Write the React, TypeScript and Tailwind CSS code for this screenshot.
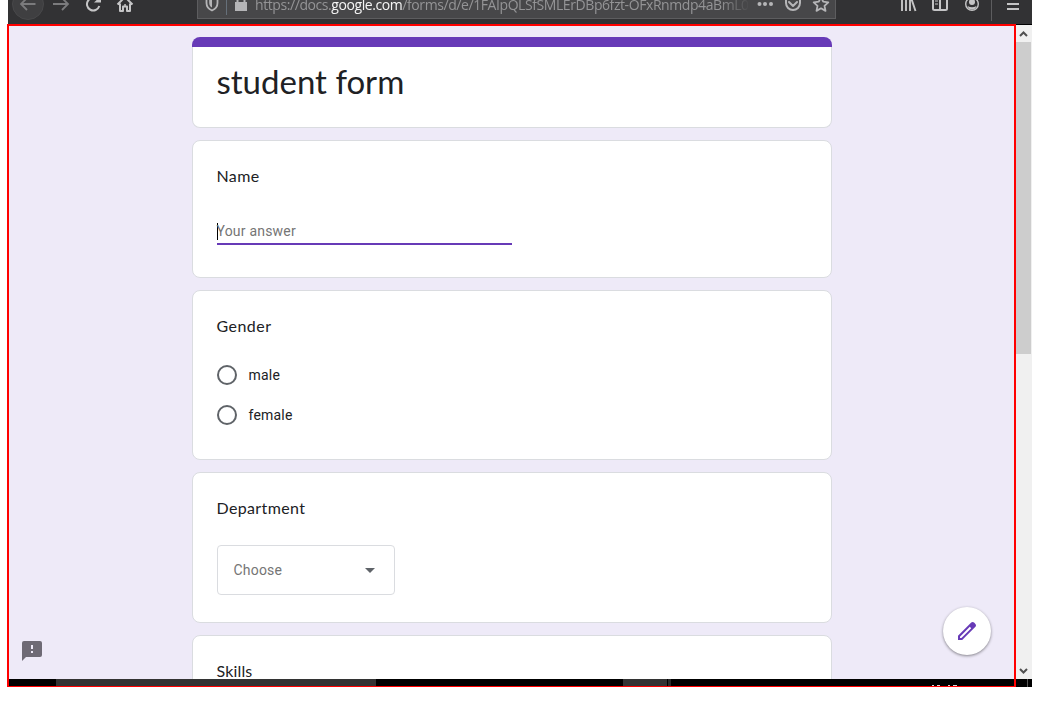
import type { ReactNode } from "react";

const cardBase = "shrink-0 rounded-lg border border-[#dadce0] bg-white px-6";
const questionTitle =
  "-ml-[0.5px] font-['Lato','Liberation_Sans',sans-serif] text-[16px] leading-6 text-[#202124] whitespace-nowrap";

function Question({ title, className, tracking, children }: {
  title: string;
  className: string;
  tracking: string;
  children?: ReactNode;
}) {
  return (
    <section className={`${cardBase} ${className} pt-[23px]`}>
      <h2 className={`${questionTitle} ${tracking}`}>{title}</h2>
      {children}
    </section>
  );
}

function Radio({ label }: { label: string }) {
  return (
    <label className="flex h-10 items-center gap-[11.5px]">
      <span className="size-5 shrink-0 rounded-full border-2 border-[#5f6368]" />
      <span className="text-[14px] leading-5 tracking-[0.2px] text-[#202124]">{label}</span>
    </label>
  );
}

function Toolbar() {
  return (
    <header className="flex h-6 w-[1024px] shrink-0 overflow-hidden bg-[#323234]">
      <svg className="h-6 w-[189px] shrink-0" viewBox="8 0 189 24" fill="none">
        <circle cx="28" cy="4" r="15.5" fill="#3f3f41" stroke="#48484a" />
        <path d="M35.500 4H21M27-2L21 4l6 6" stroke="#7b7b7d" strokeWidth="1.800" />
        <path d="M53 4h15M62-2l6 6-6 6" stroke="#7b7b7d" strokeWidth="1.800" />
        <path d="M98 0A6.300 6.300 0 1 0 99.300 6" stroke="#c5c5c6" strokeWidth="2" />
        <path d="M94 2.500h7V-4z" fill="#c5c5c6" />
        <path d="M117.500 4.500L125-3l7.500 7.500M120 3.500V11h3V6.500h4V11h3V3.500" stroke="#c5c5c6" strokeWidth="2" strokeLinejoin="round" />
        <path d="M124.300 4h1.500v2h-1.500z" fill="#c5c5c6" />
      </svg>
      <div className="flex h-[19px] w-[639px] shrink-0 border-x border-b border-[#5d5d5f] bg-[#474749]">
        <svg className="h-[18px] w-[57px] shrink-0" viewBox="198 0 57 18" fill="none">
          <path d="M206.500-2v5c0 4 2 6 5.500 7.500 3.500-1.500 5.500-3.500 5.500-7.500v-5" stroke="#b5b5b7" strokeWidth="1.800" />
          <path d="M212-2v9.500c-2-1-2.800-2.500-2.800-5V-2z" fill="#b5b5b7" />
          <path d="M226.500 0v15" stroke="#66707a" />
          <path d="M235 2h12v9h-12z" fill="#b5b5b7" />
          <path d="M237.500 3v-5h7v5" stroke="#b5b5b7" strokeWidth="2" />
        </svg>
        <div className="w-[495px] overflow-hidden mask-r-from-94% mask-r-to-100% font-['Open_Sans','Noto_Sans',sans-serif] text-[14px] leading-5 whitespace-nowrap text-[#949496]">
          <div className="-mt-[5px] tracking-[-0.42px]">
            https://docs.<span className="text-[#f5f5f5]">google.com</span>/forms/d/e/1FAIpQLSfSMLErDBp6fzt-OFxRnmdp4aBmL0
          </div>
        </div>
        <svg className="h-[18px] w-[85px] shrink-0" viewBox="750 0 85 18" fill="none">
          <g fill="#b5b5b7"><circle cx="759.500" cy="4" r="2" /><circle cx="765" cy="4" r="2" /><circle cx="771" cy="4" r="2" /></g>
          <path d="M786-3v6a7 7 0 0 0 14 0v-6" stroke="#b5b5b7" strokeWidth="2" />
          <path d="M789 2l4 4 4-4" stroke="#b5b5b7" strokeWidth="2" strokeLinecap="round" strokeLinejoin="round" />
          <path d="M821-3l2.200 4.700 5.100.6-3.800 3.500 1 5.100-4.500-2.600-4.500 2.600 1-5.100-3.800-3.500 5.100-.6z" stroke="#b5b5b7" strokeWidth="1.800" strokeLinejoin="round" />
        </svg>
      </div>
      <svg className="h-6 w-[196px] shrink-0" viewBox="836 0 196 24" fill="none">
        <path d="M902 0v11M906 0v11M910 0v11M911.500-1l4 12" stroke="#c5c5c6" strokeWidth="1.900" />
        <path d="M933-3V8.500q0 1.500 1.500 1.500h11q1.500 0 1.500-1.500V-3M940-3V10" stroke="#c5c5c6" strokeWidth="2" />
        <path d="M935 1h3M935 4h3" stroke="#c5c5c6" />
        <circle cx="972" cy="4" r="6.300" stroke="#c5c5c6" strokeWidth="1.400" />
        <circle cx="972" cy="2" r="3" fill="#c5c5c6" />
        <path d="M967.500 6q4.500 2.500 9 0-1 3.500-4.500 3.500T967.500 6z" fill="#c5c5c6" />
        <path d="M991.500 0v21" stroke="#5d5d5f" />
        <path d="M1007 4h12M1007 9h12" stroke="#c5c5c6" strokeWidth="2" />
      </svg>
    </header>
  );
}

function Taskbar() {
  return (
    <footer className="flex h-2 w-[1024px] shrink-0 overflow-hidden bg-black">
      <div className="w-12" />
      <div className="w-80 bg-[#333333]" />
      <div className="w-[247px]" />
      <div className="w-11 bg-[#333333]" />
      <div className="w-1 border-l border-black bg-[#292929]" />
      <svg className="ml-[259px] h-2 w-[28px]" viewBox="930 679 28 8" fill="#d8d8d8">
        <path d="M932 685h2v1h-2zM937 685h3v1h-3zM948 685h2v1h-2zM953 685h4v1h-4z" />
      </svg>
      <div className="ml-[69px] w-px bg-[#555555]" />
    </footer>
  );
}

function Scrollbar() {
  return (
    <aside className="flex w-4 flex-col border-t border-black bg-[#f0f0f0]">
      <svg className="h-[17px] w-4" viewBox="0 0 16 17" fill="none">
        <path d="M4 11l3.500-3.500L11 11" stroke="#505050" strokeWidth="2" />
      </svg>
      <div className="h-[312px] w-[15px] bg-[#cdcdcd]" />
      <svg className="mt-auto h-[17px] w-4" viewBox="0 0 16 17" fill="none">
        <path d="M4 7l3.500 3.500L11 7" stroke="#505050" strokeWidth="2" />
      </svg>
    </aside>
  );
}

export default function App() {
  return (
    <div className="h-[712px] w-[1040px] overflow-hidden bg-white px-2 font-['Roboto','Liberation_Sans',sans-serif]">
      <div className="relative flex h-[687px] w-[1024px] flex-col">
        <Toolbar />
        <div className="flex h-[655px] shrink-0">
          <main className="relative w-[1008px] overflow-hidden bg-[#eeeaf8]">
            <div className="ml-46 flex w-[640px] flex-col pt-[13px]">
              <header className="h-[10px] shrink-0 rounded-t-lg bg-[#673ab7]" />
              <section className="h-[81px] shrink-0 rounded-b-lg border border-t-0 border-[#dadce0] bg-white">
                <h1 className="-ml-[0.5px] pt-[14px] pl-6 font-['Lato','Liberation_Sans',sans-serif] text-[33px] leading-10 whitespace-nowrap text-[#202124]">student form</h1>
              </section>
              <Question title="Name" tracking="tracking-[0.35px]" className="mt-3 h-[138px]">
                <div className="mt-[30px] flex h-[27px] w-[295px] items-center border-b-2 border-[#673ab7]">
                  <span className="mt-px h-[17px] w-px bg-black" />
                  <span className="-ml-[1.5px] text-[14px] leading-5 tracking-[0.2px] text-[#757575]">Your answer</span>
                </div>
              </Question>
              <Question title="Gender" tracking="tracking-[0.45px]" className="mt-3 h-[170px]">
                <div className="mt-[17px]">
                  <Radio label="male" />
                  <Radio label="female" />
                </div>
              </Question>
              <Question title="Department" tracking="tracking-[0.36px]" className="mt-3 h-[151px]">
                <div className="mt-[25px] flex h-[50px] w-[178px] items-center justify-between rounded-[4px] border border-[#dadce0] pr-[19px] pl-[15.5px]">
                  <span className="text-[14px] leading-5 tracking-[0.2px] text-[#757575]">Choose</span>
                  <svg className="mt-px h-[5px] w-[10px]" viewBox="0 0 10 5"><path d="M0 0h10L5 5z" fill="#5f6368" /></svg>
                </div>
              </Question>
              <Question title="Skills" tracking="tracking-[0.15px]" className="mt-3 h-[170px]" />
            </div>
            <svg className="absolute top-[617px] left-[14px] size-5" viewBox="2 2 20 20">
              <path d="M20 2H4a2 2 0 0 0-2 2v18l4-4h14a2 2 0 0 0 2-2V4a2 2 0 0 0-2-2zm-7 12h-2v-2h2v2zm0-4h-2V6h2v4z" fill="#6e6a75" />
            </svg>
            <button className="absolute top-[583px] left-[935px] flex size-12 items-center justify-center rounded-full bg-white shadow-[0_1px_3px_rgba(0,0,0,0.45)]" aria-label="Edit">
              <svg className="size-6" viewBox="0 0 24 24" fill="#673ab7">
                <path d="M20.410 4.940l-1.350-1.350c-.78-.78-2.050-.78-2.830 0L3 16.820V21h4.180L20.410 7.770c.79-.78.79-2.050 0-2.830zm-14 14.120L5 19v-1.360l9.820-9.820 1.410 1.410-9.820 9.830z" />
              </svg>
            </button>
          </main>
          <Scrollbar />
        </div>
        <Taskbar />
        <div className="pointer-events-none absolute top-6 -left-px h-[663px] w-[1009px] border-2 border-b border-[#ff0000]" />
      </div>
    </div>
  );
}
